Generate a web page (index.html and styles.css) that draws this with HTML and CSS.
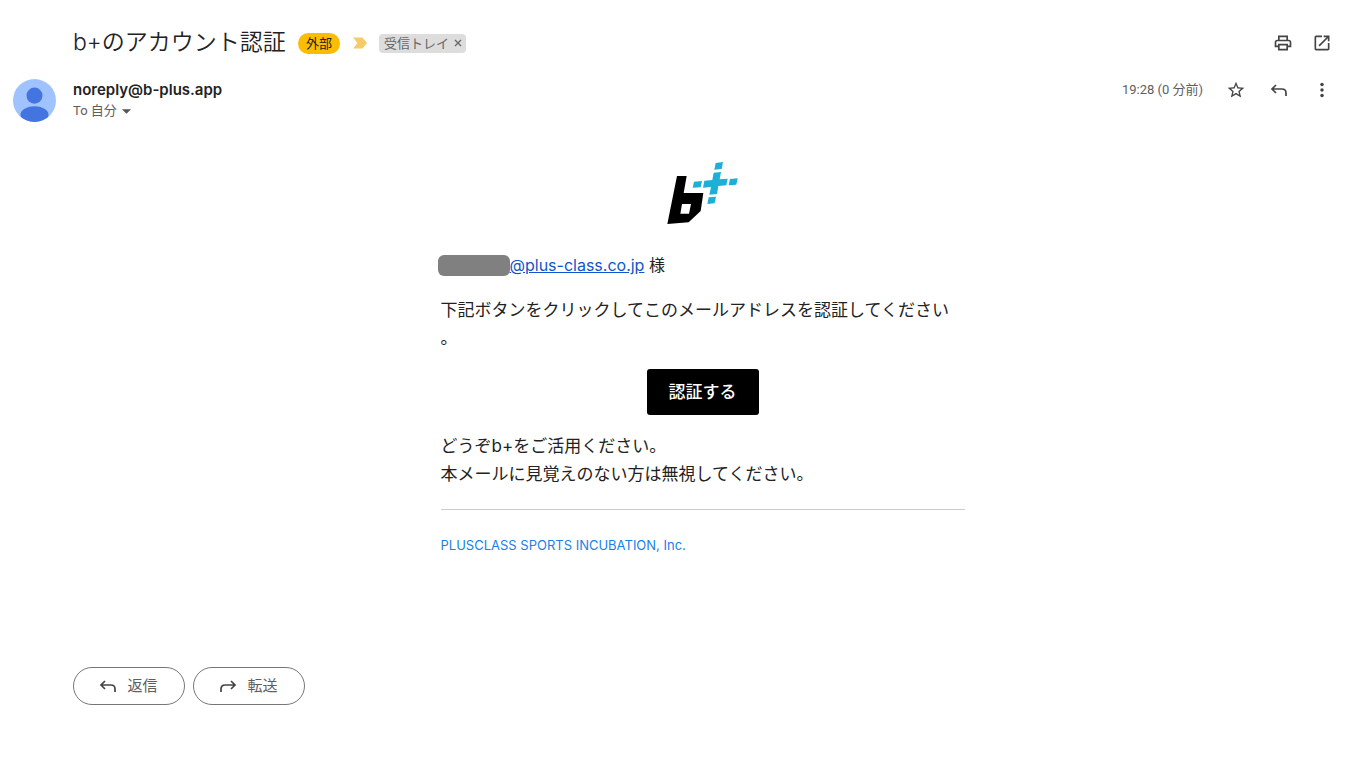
FILE: index.html
```html
<!DOCTYPE html>
<html lang="ja">
<head>
<meta charset="utf-8">
<meta name="viewport" content="width=device-width, initial-scale=1">
<title>b+のアカウント認証</title>
<link rel="stylesheet" href="styles.css">
</head>
<body>
<main class="mail">
  <header class="subject">
    <h1 class="subject-title">b+のアカウント認証</h1>
    <span class="tag-external">外部</span>
    <svg class="importance" viewBox="0 0 14 12" aria-hidden="true"><path d="M0 0.5h9.500L14 6l-4.500 5.500H0L4.500 6z"/></svg>
    <span class="tag-inbox">受信トレイ<button class="tag-close" aria-label="ラベルを削除"><svg viewBox="0 0 8 8"><path d="M1 1l6 6M7 1l-6 6"/></svg></button></span>
    <div class="subject-tools">
      <button class="icon-button" aria-label="印刷"><svg viewBox="0 0 24 24"><path d="M19 8h-1V3H6v5H5c-1.660 0-3 1.340-3 3v6h4v4h12v-4h4v-6c0-1.660-1.340-3-3-3zM8 5h8v3H8V5zm8 14H8v-4h8v4zm2-4v-2H6v2H4v-4c0-.550.450-1 1-1h14c.550 0 1 .450 1 1v4h-2z"/></svg></button>
      <button class="icon-button" aria-label="新しいウィンドウ"><svg viewBox="0 0 24 24"><path d="M19 19H5V5h7V3H5a2 2 0 0 0-2 2v14a2 2 0 0 0 2 2h14c1.100 0 2-.900 2-2v-7h-2v7zM14 3v2h3.590l-9.830 9.830 1.410 1.410L19 6.410V10h2V3h-7z"/></svg></button>
    </div>
  </header>

  <section class="sender">
    <svg class="avatar" viewBox="0 0 44 44" aria-hidden="true">
      <defs><clipPath id="disc"><circle cx="22" cy="22" r="22"/></clipPath></defs>
      <g clip-path="url(#disc)"><rect class="avatar-back" width="44" height="44"/><circle cx="22" cy="17" r="8.200"/><ellipse cx="22" cy="36.500" rx="14.300" ry="8.500"/></g>
    </svg>
    <div class="sender-info">
      <div class="sender-name">noreply@b-plus.app</div>
      <button class="recipient">To 自分<svg viewBox="0 0 10 5" aria-hidden="true"><path d="M0 0h10L5 5z"/></svg></button>
    </div>
    <div class="sender-tools">
      <time class="sent-time">19:28 (0 分前)</time>
      <button class="icon-button" aria-label="スター"><svg viewBox="0 0 24 24"><path d="M22 9.240l-7.190-.620L12 2 9.190 8.630 2 9.240l5.460 4.730L5.820 21 12 17.270 18.180 21l-1.630-7.030L22 9.240zM12 15.400l-3.760 2.270 1-4.280-3.320-2.880 4.380-.380L12 6.100l1.710 4.040 4.380.380-3.320 2.880 1 4.280L12 15.400z"/></svg></button>
      <button class="icon-button" aria-label="返信"><svg class="arrow" viewBox="0 0 18 18"><path d="M6 4L2 8l4 4M2 8h10c2.500 0 4 1.500 4 4v3"/></svg></button>
      <button class="icon-button" aria-label="その他"><svg viewBox="0 0 24 24"><circle cx="12" cy="5.500" r="2.100"/><circle cx="12" cy="12" r="2.100"/><circle cx="12" cy="18.500" r="2.100"/></svg></button>
    </div>
  </section>

  <article class="letter">
    <svg class="logo" viewBox="51 33 216 192" role="img" aria-label="b+">
      <path class="logo-b" fill-rule="evenodd" d="M81 78h29l-9 51h59l-8 54-36 34-64 5zM96 162l-5 29h26l6-29z"/>
      <path class="logo-plus" d="M197 39l22-3-4 21-22 2zM191 68l22-2-4 22 24-2-4 20-24 2-4 24-23 2 5-23-24 2 4-21 24-2zM132 95l24-2-4 19-24 1zM240 87l23-2-4 19-23 2zM176 142l22-2-4 20-22 2z"/>
    </svg>
    <p class="addressee"><span class="redacted"></span><a class="address" href="#">@plus-class.co.jp</a> 様</p>
    <p class="request">下記ボタンをクリックしてこのメールアドレスを認証してください。</p>
    <button class="verify">認証する</button>
    <p class="closing">どうぞb+をご活用ください。<br>本メールに見覚えのない方は無視してください。</p>
    <hr class="divider">
    <a class="company" href="#">PLUSCLASS SPORTS INCUBATION, Inc.</a>
  </article>

  <footer class="actions">
    <button class="action"><svg class="arrow" viewBox="0 0 18 18" aria-hidden="true"><path d="M6 4L2 8l4 4M2 8h10c2.500 0 4 1.500 4 4v3"/></svg>返信</button>
    <button class="action"><svg class="arrow" viewBox="0 0 18 18" aria-hidden="true"><path d="M12 4l4 4-4 4M16 8H6c-2.500 0-4 1.500-4 4v3"/></svg>転送</button>
  </footer>
</main>
</body>
</html>
```

FILE: styles.css
```css
* { box-sizing: border-box; }
body {
  margin: 0;
  background: #fff;
  color: #222;
  font-family: Inter, "Noto Sans CJK JP", sans-serif;
}
button {
  margin: 0;
  padding: 0;
  border: 0;
  background: none;
  color: inherit;
  font: inherit;
  cursor: pointer;
}
svg { display: block; flex: none; }
p { margin: 0; }

.mail { padding: 24px 34px 24px 73px; }

.subject { display: flex; align-items: center; height: 38px; }
.subject-title {
  margin: 0;
  padding-bottom: 2px;
  font-family: Inter, "Noto Sans CJK JP", sans-serif;
  font-size: 23px;
  font-weight: 350;
  line-height: 32px;
}
.tag-external {
  margin-left: 12px;
  padding: 0 8px;
  border-radius: 11px;
  background: #fbbc04;
  font-size: 13px;
  line-height: 21px;
}
.importance { width: 14px; height: 12px; margin: 0 12px 0 13px; fill: #f7cb69; }
.tag-inbox {
  display: flex;
  align-items: center;
  gap: 5px;
  padding: 0 4px 0 5px;
  border-radius: 4px;
  background: #ddd;
  color: #666;
  font-size: 13px;
  line-height: 19px;
}
.tag-close svg { width: 8px; height: 8px; fill: none; stroke: #666; stroke-width: 1.3; }
.subject-tools { display: flex; gap: 19px; margin-left: auto; }
.icon-button { width: 20px; height: 20px; }
.icon-button svg { width: 20px; height: 20px; fill: #444; }
.icon-button svg.arrow { width: 18px; height: 18px; margin: 0 auto; fill: none; }
.arrow { width: 18px; height: 18px; fill: none; stroke: #444; stroke-width: 1.7; }

.sender { display: flex; align-items: flex-start; margin: 17px 0 0 -60px; }
.avatar { width: 43px; height: 43px; margin-right: 17px; fill: #4374e0; }
.avatar-back { fill: #a0c3ff; }
.sender-name {
  font-size: 15px;
  font-weight: 600;
  line-height: 22px;
}
.recipient {
  display: flex;
  align-items: center;
  gap: 5px;
  color: #5e5e5e;
  font-family: Roboto, "Noto Sans CJK JP", sans-serif;
  font-size: 13px;
  line-height: 20px;
}
.recipient svg { width: 9px; height: 5px; fill: #555; }
.sender-tools { display: flex; align-items: center; gap: 23px; height: 22px; margin-left: auto; }
.sent-time {
  color: #5e5e5e;
  font-family: Roboto, "Noto Sans CJK JP", sans-serif;
  font-size: 13px;
  line-height: 20px;
}

.letter {
  max-width: 524px;
  margin: 39px auto 0;
  font-size: 17px;
  line-height: 28px;
}
.logo { width: 72px; height: 64px; margin: 0 auto; }
.logo-b { fill: #000; }
.logo-plus { fill: #1cb0d8; }
.addressee { display: flex; align-items: center; margin: 26px 0 0 -3px; white-space: pre; font-size: 16px; }
.redacted { width: 72px; height: 21px; border-radius: 6px; background: #808080; }
.address { color: #1155cc; }
.request { margin-top: 17px; line-break: anywhere; }
.verify {
  display: block;
  margin: 17px auto;
  padding: 9px 22px;
  border-radius: 3px;
  background: #000;
  color: #fff;
  font-weight: 500;
  line-height: 28px;
}
.divider { margin: 21px 0 0; border: 0; border-top: 1px solid #ccc; }
.company {
  display: block;
  margin-top: 21px;
  color: #1a7fe8;
  font-size: 13px;
  text-decoration: none;
}

.actions { display: flex; gap: 8px; margin-top: 108px; }
.action {
  display: flex;
  align-items: center;
  justify-content: center;
  gap: 10px;
  width: 112px;
  height: 38px;
  padding-right: 1px;
  border: 1px solid #747775;
  border-radius: 19px;
  color: #5e5e5e;
  font-size: 15px;
  line-height: 20px;
}
```
